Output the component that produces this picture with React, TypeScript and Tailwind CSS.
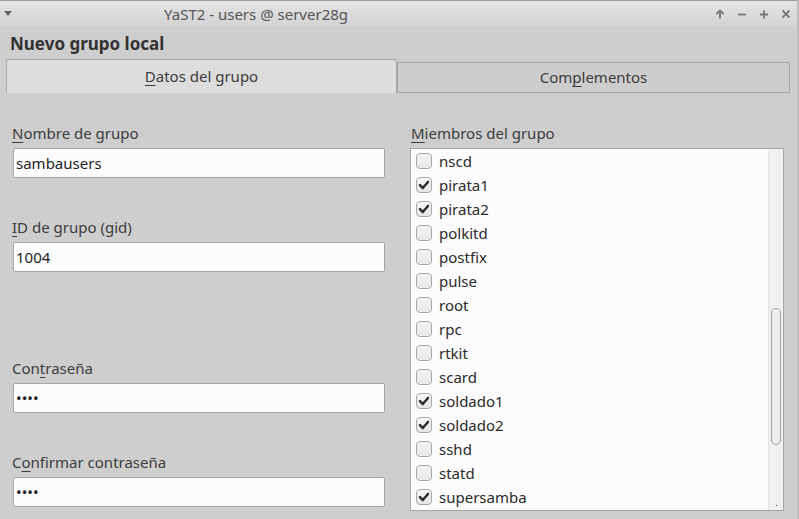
import React from "react";

const members: [string, boolean][] = [
  ["nscd", false],
  ["pirata1", true],
  ["pirata2", true],
  ["polkitd", false],
  ["postfix", false],
  ["pulse", false],
  ["root", false],
  ["rpc", false],
  ["rtkit", false],
  ["scard", false],
  ["soldado1", true],
  ["soldado2", true],
  ["sshd", false],
  ["statd", false],
  ["supersamba", true],
];

function Check({ on }: { on: boolean }) {
  return (
    <div className="w-[16px] h-[16px] rounded-[4px] border border-[#a9a9a9] bg-gradient-to-b from-[#f7f7f7] to-[#e6e6e6] flex items-center justify-center shrink-0">
      {on && (
        <svg width="12" height="12" viewBox="0 0 12 12">
          <path d="M2 6.2 L4.8 9 L10 3" fill="none" stroke="#2e2e2e" strokeWidth="2.6" strokeLinecap="round" strokeLinejoin="round" />
        </svg>
      )}
    </div>
  );
}

function Field({ label, value, mt }: { label: [string, string, string]; value: string; mt: string }) {
  return (
    <div className={mt}>
      <div className="h-[20px] leading-[20px] text-[15px] text-[#3c3c3c] pl-[12px]">
        {label[0]}
        <span className="underline underline-offset-[3px] decoration-1">{label[1]}</span>
        {label[2]}
      </div>
      <div className="mt-[5px] ml-[13px] w-[372px] h-[30px] bg-[#fcfcfc] border border-[#a4a4a4] rounded-[2px] flex items-center pl-[2px] text-[15px] text-[#1e1e1e]">
        {value}
      </div>
    </div>
  );
}

export default function App() {
  return (
    <div
      className="w-[799px] h-[519px] bg-[#cecece] overflow-hidden relative border-r-2 border-[#bdbdbd]"
      style={{ fontFamily: '"Noto Sans", "Open Sans", sans-serif' }}
    >
      {/* title bar */}
      <div className="h-[27px] border-t border-[#9c9c9c] bg-gradient-to-b from-[#e4e4e4] to-[#d3d3d3] flex items-center relative">
        <svg className="ml-[4px]" width="8" height="6" viewBox="0 0 8 6">
          <path d="M0 0 H8 L4 5 Z" fill="#666" />
        </svg>
        <div className="ml-[152px] text-[15px] text-[#555] leading-none">YaST2 - users @ server28g</div>
        <div className="ml-auto flex items-center gap-[12px] mr-[6px]">
          <svg width="10" height="10" viewBox="0 0 10 10">
            <path d="M5 9.5 V1.5 M1.5 5 L5 1.5 L8.5 5" fill="none" stroke="#777" strokeWidth="1.8" />
          </svg>
          <svg width="10" height="10" viewBox="0 0 10 10">
            <path d="M1 5.5 H9" fill="none" stroke="#777" strokeWidth="1.8" />
          </svg>
          <svg width="10" height="10" viewBox="0 0 10 10">
            <path d="M1 5.5 H9 M5 1.5 V9.5" fill="none" stroke="#777" strokeWidth="1.8" />
          </svg>
          <svg width="10" height="10" viewBox="0 0 10 10">
            <path d="M1.5 1.5 L8.5 8.5 M8.5 1.5 L1.5 8.5" fill="none" stroke="#777" strokeWidth="1.8" />
          </svg>
        </div>
      </div>

      {/* heading */}
      <div className="h-[32px] flex items-center pl-[10px] pt-[2px] text-[17px] font-bold text-[#333]">Nuevo grupo local</div>

      {/* tabs */}
      <div className="h-[34px] flex items-end pl-[6px]">
        <div className="w-[391px] h-[34px] bg-[#dddddd] border border-b-0 border-[#a8a8a8] rounded-t-[3px] flex items-center justify-center text-[15px] text-[#3c3c3c]">
          <span className="underline underline-offset-[3px] decoration-1">D</span>atos del grupo
        </div>
        <div className="w-[393px] h-[31px] bg-[#cdcdcd] border border-[#a4a4a4] rounded-tr-[3px] flex items-center justify-center text-[15px] text-[#3c3c3c]">
          Com<span className="underline underline-offset-[3px] decoration-1">p</span>lementos
        </div>
      </div>

      {/* content */}
      <div className="flex">
        <div className="w-[398px]">
          <Field label={["", "N", "ombre de grupo"]} value="sambausers" mt="mt-[30px]" />
          <Field label={["", "I", "D de grupo (gid)"]} value="1004" mt="mt-[39px]" />
          <Field label={["Con", "t", "raseña"]} value="••••" mt="mt-[86px]" />
          <Field label={["C", "o", "nfirmar contraseña"]} value="••••" mt="mt-[39px]" />
        </div>
        <div className="mt-[30px] ml-[12px]">
          <div className="h-[20px] leading-[20px] text-[15px] text-[#3c3c3c] pl-[1px]">
            <span className="underline underline-offset-[3px] decoration-1">M</span>iembros del grupo
          </div>
          <div className="mt-[5px] w-[374px] h-[363px] bg-[#fcfcfc] border border-[#a4a4a4] flex">
            <div className="flex-1 pl-[5px]">
              {members.map(([n, on]) => (
                <div key={n} className="h-[24px] flex items-center gap-[7px] text-[15px] text-[#2a2a2a]">
                  <Check on={on} />
                  <span>{n}</span>
                </div>
              ))}
            </div>
            <div className="w-[15px] h-full bg-[#f0f0f0] border-l border-[#e2e2e2] rounded-tl-[4px] relative">
              <div className="absolute left-[2px] top-[159px] w-[10px] h-[137px] rounded-full border border-[#a6a6a6] bg-[#ececec]" />
              <div className="absolute left-[7px] bottom-[4px] w-[1px] h-[1px] bg-[#555]" />
            </div>
          </div>
        </div>
      </div>
    </div>
  );
}
